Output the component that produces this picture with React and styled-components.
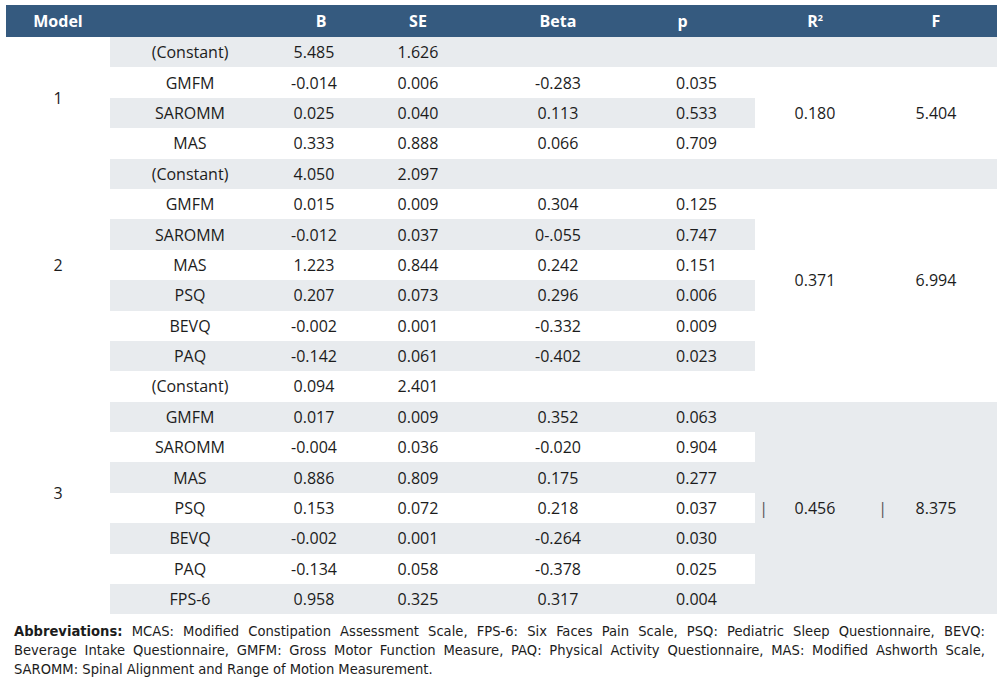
import React from 'react';
import styled, { createGlobalStyle } from 'styled-components';

const GlobalStyle = createGlobalStyle`
  body {
    margin: 0;
    background: #fff;
    font-family: "Open Sans", "Noto Sans", sans-serif;
    color: #1c1c1c;
  }
`;

const Page = styled.div`
  padding: 5px 3px 0 6px;
  width: 991px;
`;

const Table = styled.table`
  width: 991px;
  border-collapse: collapse;
  table-layout: fixed;
  font-size: 16px;
`;

const HeadCell = styled.th`
  background: #355a7f;
  color: #fff;
  font-weight: 700;
  height: 32px;
  padding: 0 ${(p) => (p.$shift < 0 ? -2 * p.$shift : 0)}px 0 ${(p) => (p.$shift > 0 ? 2 * p.$shift : 0)}px;
  text-align: center;
`;

const Sup = styled.sup`
  font-size: 9px;
`;

const Cell = styled.td`
  height: 30.4px;
  padding: 0;
  text-align: center;
  vertical-align: middle;
  background: ${(p) => (p.$gray ? '#e8ebee' : '#fff')};
`;

const Stat = styled.div`
  display: grid;
  grid-template-columns: ${(p) => p.$lead}px 1fr ${(p) => p.$lead}px;
  align-items: center;
`;

const Pipe = styled.span`
  color: #555;
  text-align: right;
`;

const Note = styled.div`
  margin-top: 7px;
  padding: 0 12px 0 8px;
  font-family: "Liberation Sans Narrow", "DejaVu Sans Condensed", "Liberation Sans", sans-serif;
  font-stretch: condensed;
  font-size: 14.6px;
  line-height: 19px;
  color: #1c1c1c;
`;

const NoteLine = styled.div`
  text-align: ${(p) => (p.$justify ? 'justify' : 'left')};
  text-align-last: ${(p) => (p.$justify ? 'justify' : 'left')};
  white-space: nowrap;
`;

const models = [
  {
    id: '1',
    r2: '0.180',
    f: '5.404',
    rows: [
      ['(Constant)', '5.485', '1.626', '', ''],
      ['GMFM', '-0.014', '0.006', '-0.283', '0.035'],
      ['SAROMM', '0.025', '0.040', '0.113', '0.533'],
      ['MAS', '0.333', '0.888', '0.066', '0.709'],
    ],
  },
  {
    id: '2',
    r2: '0.371',
    f: '6.994',
    rows: [
      ['(Constant)', '4.050', '2.097', '', ''],
      ['GMFM', '0.015', '0.009', '0.304', '0.125'],
      ['SAROMM', '-0.012', '0.037', '0-.055', '0.747'],
      ['MAS', '1.223', '0.844', '0.242', '0.151'],
      ['PSQ', '0.207', '0.073', '0.296', '0.006'],
      ['BEVQ', '-0.002', '0.001', '-0.332', '0.009'],
      ['PAQ', '-0.142', '0.061', '-0.402', '0.023'],
    ],
  },
  {
    id: '3',
    r2: '0.456',
    f: '8.375',
    pipes: true,
    rows: [
      ['(Constant)', '0.094', '2.401', '', ''],
      ['GMFM', '0.017', '0.009', '0.352', '0.063'],
      ['SAROMM', '-0.004', '0.036', '-0.020', '0.904'],
      ['MAS', '0.886', '0.809', '0.175', '0.277'],
      ['PSQ', '0.153', '0.072', '0.218', '0.037'],
      ['BEVQ', '-0.002', '0.001', '-0.264', '0.030'],
      ['PAQ', '-0.134', '0.058', '-0.378', '0.025'],
      ['FPS-6', '0.958', '0.325', '0.317', '0.004'],
    ],
  },
];

const StatCell = ({ value, pipe, lead, gray, span }) => (
  <Cell rowSpan={span} $gray={gray}>
    {pipe ? (
      <Stat $lead={lead}>
        <Pipe>|</Pipe>
        <span>{value}</span>
        <span />
      </Stat>
    ) : (
      value
    )}
  </Cell>
);

export default function App() {
  let index = 0;
  const body = [];
  models.forEach((m) => {
    m.rows.forEach((r, i) => {
      const gray = index % 2 === 0;
      index += 1;
      body.push(
        <tr key={`${m.id}-${i}`}>
          {i === 0 && <Cell rowSpan={m.rows.length}>{m.id}</Cell>}
          {r.map((v, j) => (
            <Cell key={j} $gray={gray}>{v}</Cell>
          ))}
          {i === 0 && (
            <>
              <Cell $gray={gray} />
              <Cell $gray={gray} />
            </>
          )}
          {i === 1 && (
            <>
              <StatCell span={m.rows.length - 1} gray={gray} value={m.r2} pipe={m.pipes} lead={13} />
              <StatCell span={m.rows.length - 1} gray={gray} value={m.f} pipe={m.pipes} lead={12} />
            </>
          )}
        </tr>
      );
    });
  });

  return (
    <Page>
      <GlobalStyle />
      <Table>
        <colgroup>
          <col style={{ width: 104 }} />
          <col style={{ width: 160 }} />
          <col style={{ width: 88 }} />
          <col style={{ width: 120 }} />
          <col style={{ width: 160 }} />
          <col style={{ width: 117 }} />
          <col style={{ width: 120 }} />
          <col style={{ width: 122 }} />
        </colgroup>
        <thead>
          <tr>
            <HeadCell>Model</HeadCell>
            <HeadCell />
            <HeadCell $shift={7}>B</HeadCell>
            <HeadCell>SE</HeadCell>
            <HeadCell>Beta</HeadCell>
            <HeadCell $shift={-14}>p</HeadCell>
            <HeadCell>
              R<Sup>2</Sup>
            </HeadCell>
            <HeadCell>F</HeadCell>
          </tr>
        </thead>
        <tbody>{body}</tbody>
      </Table>
      <Note>
        <NoteLine $justify>
          <b>Abbreviations:</b> MCAS: Modified Constipation Assessment Scale, FPS-6: Six Faces Pain Scale, PSQ: Pediatric Sleep Questionnaire, BEVQ:
        </NoteLine>
        <NoteLine $justify>
          Beverage Intake Questionnaire, GMFM: Gross Motor Function Measure, PAQ: Physical Activity Questionnaire, MAS: Modified Ashworth Scale,
        </NoteLine>
        <NoteLine>SAROMM: Spinal Alignment and Range of Motion Measurement.</NoteLine>
      </Note>
    </Page>
  );
}
